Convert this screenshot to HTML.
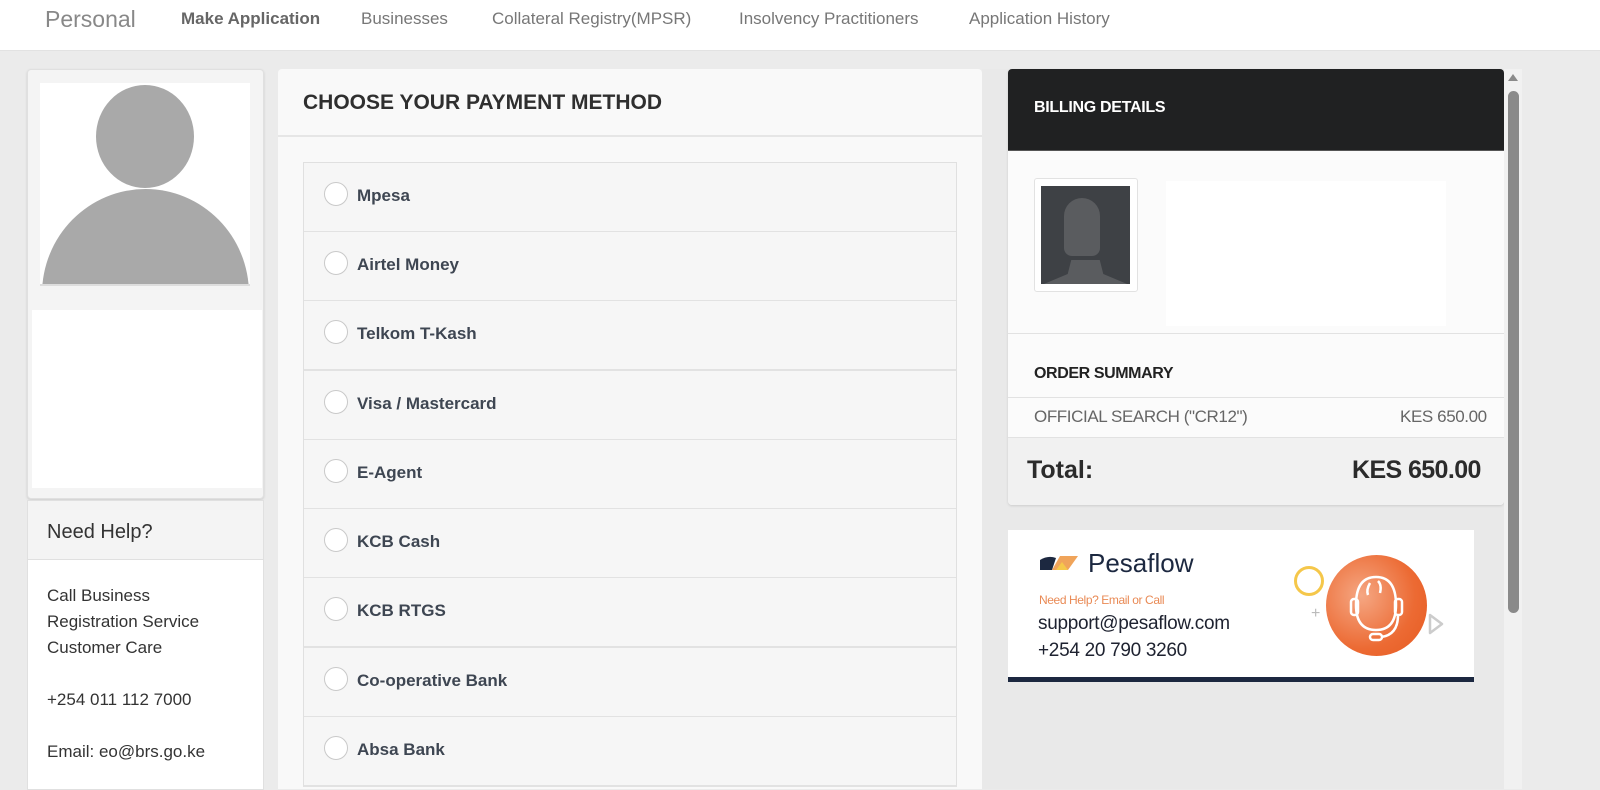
<!DOCTYPE html>
<html><head><meta charset="utf-8"><style>
*{box-sizing:border-box;margin:0;padding:0}
body{width:1600px;height:787px;overflow:hidden;background:#ebebeb;font-family:"Liberation Sans",sans-serif;position:relative}
.a{position:absolute}
.nav{left:0;top:0;width:1600px;height:51px;background:#fff;border-bottom:1px solid #e2e2e2}
.nav span{position:absolute;top:9px;font-size:17px;color:#777}
.row{position:absolute;left:303px;width:654px;height:70px;background:#f6f6f6;border-left:1px solid #e0e0e0;border-right:1px solid #e0e0e0;border-bottom:2px solid #e2e2e2}
.row i{position:absolute;left:20px;top:19px;width:24px;height:24px;border:1px solid #c9c9c9;border-radius:50%;background:#fff}
.row b{position:absolute;left:53px;top:23px;font-size:17px;color:#3e4652}
</style></head><body>
<div class="a nav">
<span style="left:45px;font-size:23px;top:6px;color:#888">Personal</span>
<span style="left:181px;font-weight:bold;color:#666">Make Application</span>
<span style="left:361px">Businesses</span>
<span style="left:492px">Collateral Registry(MPSR)</span>
<span style="left:739px">Insolvency Practitioners</span>
<span style="left:969px">Application History</span>
</div>

<!-- left sidebar -->
<div class="a" style="left:27px;top:69px;width:237px;height:430px;background:#f4f4f4;border:1px solid #e0e0e0;border-radius:4px;box-shadow:0 1px 2px #ccc"></div>
<div class="a" style="left:40px;top:83px;width:210px;height:203px;background:#fff;overflow:hidden;border-bottom:2px solid #ddd">
<div class="a" style="left:56px;top:2px;width:98px;height:103px;border-radius:50%;background:#a9a9a9"></div>
<div class="a" style="left:2px;top:106px;width:207px;height:210px;border-radius:50%;background:#a9a9a9"></div>
</div>
<div class="a" style="left:32px;top:310px;width:230px;height:178px;background:#fff"></div>
<div class="a" style="left:27px;top:500px;width:237px;height:290px;background:#fff;border:1px solid #e0e0e0">
<div style="height:59px;background:#f4f4f4;border-bottom:1px solid #e0e0e0;padding:20px 0 0 19px;font-size:20px;color:#333">Need Help?</div>
<div style="padding:23px 0 0 19px;font-size:17px;line-height:26px;color:#333">Call Business<br>Registration Service<br>Customer Care<br><br>+254 011 112 7000<br><br>Email: eo@brs.go.ke</div>
</div>

<!-- middle -->
<div class="a" style="left:278px;top:69px;width:704px;height:720px;background:#f9f9f9;border-radius:4px 4px 0 0">
<div style="height:68px;border-bottom:2px solid #e6e6e6;padding:22px 0 0 25px;font-size:21px;font-weight:bold;color:#2f2f2f">CHOOSE YOUR PAYMENT METHOD</div>
</div>
<div class="a" style="left:303px;top:162px;width:654px;height:1px;background:#e0e0e0"></div>
<div class="row" style="top:163px"><i></i><b>Mpesa</b></div>
<div class="row" style="top:232px"><i></i><b>Airtel Money</b></div>
<div class="row" style="top:301px"><i></i><b>Telkom T-Kash</b></div>
<div class="row" style="top:371px"><i></i><b>Visa / Mastercard</b></div>
<div class="row" style="top:440px"><i></i><b>E-Agent</b></div>
<div class="row" style="top:509px"><i></i><b>KCB Cash</b></div>
<div class="row" style="top:578px"><i></i><b>KCB RTGS</b></div>
<div class="row" style="top:648px"><i></i><b>Co-operative Bank</b></div>
<div class="row" style="top:717px"><i></i><b>Absa Bank</b></div>

<!-- right -->
<div class="a" style="left:982px;top:69px;width:540px;height:720px;background:#e9e9e9"></div>
<div class="a" style="left:1008px;top:69px;width:496px;height:436px;background:#fbfbfb;border-radius:4px;box-shadow:0 1px 2px #ccc"></div>
<div class="a" style="left:1008px;top:69px;width:496px;height:82px;background:#202122;border-radius:4px 4px 0 0;border-bottom:1px solid #555;color:#fff;font-weight:bold;font-size:16px;padding:30px 0 0 26px;letter-spacing:-0.3px">BILLING DETAILS</div>
<div class="a" style="left:1034px;top:178px;width:104px;height:114px;background:#fff;border:1px solid #e2e2e2;border-radius:3px">
<div class="a" style="left:6px;top:7px;width:89px;height:98px;background:#3e4145;overflow:hidden">
<div class="a" style="left:23px;top:12px;width:36px;height:58px;border-radius:18px 18px 8px 8px;background:#5a5c5f"></div>
<div class="a" style="left:0;top:68px;width:89px;height:40px;background:#5a5c5f;clip-path:polygon(0 78%,30% 50%,34% 15%,66% 15%,70% 50%,100% 78%,100% 100%,0 100%)"></div>
</div></div>
<div class="a" style="left:1166px;top:181px;width:280px;height:145px;background:#fff"></div>
<div class="a" style="left:1008px;top:333px;width:496px;height:1px;background:#e2e2e2"></div>
<div class="a" style="left:1034px;top:365px;font-size:16px;font-weight:bold;color:#222;letter-spacing:-0.4px">ORDER SUMMARY</div>
<div class="a" style="left:1008px;top:397px;width:496px;height:1px;background:#e2e2e2"></div>
<div class="a" style="left:1034px;top:407px;font-size:17px;color:#666;letter-spacing:-0.4px">OFFICIAL SEARCH ("CR12")</div>
<div class="a" style="left:1400px;top:407px;font-size:17px;color:#666;letter-spacing:-0.4px">KES 650.00</div>
<div class="a" style="left:1008px;top:437px;width:496px;height:68px;background:#f1f1f1;border-top:1px solid #e2e2e2;border-radius:0 0 4px 4px"></div>
<div class="a" style="left:1027px;top:456px;font-size:25px;font-weight:bold;color:#2b2b2b">Total:</div>
<div class="a" style="left:1352px;top:456px;font-size:25px;font-weight:bold;color:#2b2b2b;letter-spacing:-0.6px">KES 650.00</div>

<div class="a" style="left:1008px;top:530px;width:466px;height:152px;background:#fff;border-bottom:5px solid #1c2840">
<svg class="a" style="left:30px;top:22px" width="42" height="20"><path d="M2 18 L2 8 Q10 3 18 6 L14 18Z" fill="#1c2840"/><path d="M14 18 L22 4 L40 4 L30 18Z" fill="#f0a45a"/><path d="M18 18 L24 10 L30 18Z" fill="#f5c84a"/></svg>
<div class="a" style="left:80px;top:18px;font-size:26px;color:#1c2840">Pesaflow</div>
<div class="a" style="left:31px;top:63px;font-size:12px;color:#e98a55;letter-spacing:-0.4px">Need Help? Email or Call</div>
<div class="a" style="left:30px;top:83px;font-size:19px;color:#1e2230;letter-spacing:-0.3px">support@pesaflow.com</div>
<div class="a" style="left:30px;top:110px;font-size:19px;color:#1e2230;letter-spacing:-0.3px">+254 20 790 3260</div>
<div class="a" style="left:286px;top:36px;width:30px;height:30px;border:3px solid #f5c74a;border-radius:50%"></div>
<div class="a" style="left:303px;top:75px;font-size:16px;color:#bbb">+</div>
<div class="a" style="left:318px;top:25px;width:101px;height:101px;border-radius:50%;background:radial-gradient(circle at 35% 40%,#f5a783,#ec6a33 60%,#e65a20)">
<svg width="101" height="101"><g fill="none" stroke="#fff" stroke-width="2.5"><path d="M30 50 Q30 22 50 22 Q70 22 70 50 Q70 75 50 75 Q30 75 30 50"/><path d="M44 28 Q40 35 42 40 M52 26 Q56 30 54 38"/><rect x="25" y="44" width="7" height="16" rx="3"/><rect x="69" y="44" width="7" height="16" rx="3"/><path d="M72 60 Q72 80 55 82"/><rect x="44" y="79" width="12" height="6" rx="3"/></g></svg>
</div>
<svg class="a" style="left:418px;top:82px" width="20" height="24"><path d="M4 3 L16 12 L4 21Z" fill="none" stroke="#ccc" stroke-width="2.5" stroke-linejoin="round"/></svg>
</div>

<!-- scrollbar -->
<div class="a" style="left:1504px;top:69px;width:18px;height:720px;background:#f1f1f1"></div>
<div class="a" style="left:1508px;top:74px;width:0;height:0;border-left:5px solid transparent;border-right:5px solid transparent;border-bottom:7px solid #8a8a8a"></div>
<div class="a" style="left:1508px;top:91px;width:11px;height:522px;background:#8a8a8a;border-radius:6px"></div>
</body></html>
